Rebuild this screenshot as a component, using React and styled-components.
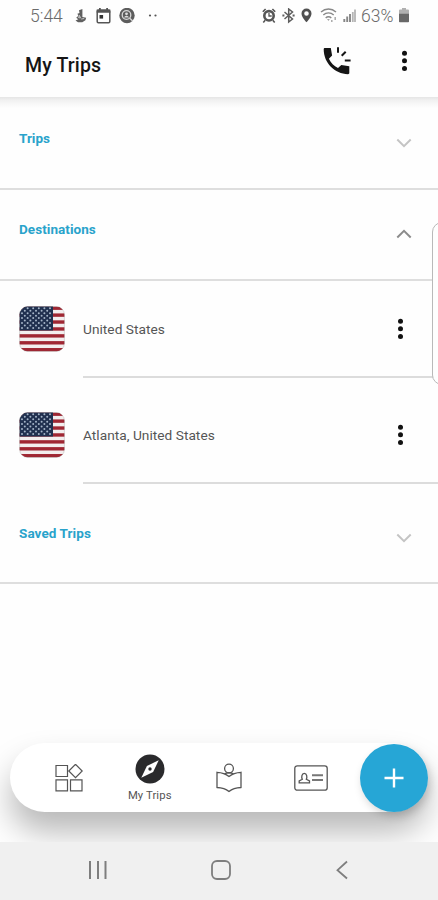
import React from "react";
import styled, { createGlobalStyle } from "styled-components";

const GlobalStyle = createGlobalStyle`
  * {
    box-sizing: border-box;
  }
  body {
    margin: 0;
    background-color: #fefefe;
    font-family: Roboto, "Liberation Sans", sans-serif;
  }
  svg {
    display: block;
    flex-shrink: 0;
  }
`;

const Screen = styled.div`
  position: relative;
  width: 438px;
  height: 900px;
  display: flex;
  flex-direction: column;
  overflow: hidden;
  background-color: #fefefe;
`;

const StatusBar = styled.div`
  height: 32px;
  padding: 0 29px 0 30px;
  display: flex;
  align-items: center;
  justify-content: space-between;
  color: #6b6b6b;
`;

const StatusGroup = styled.div`
  height: 32px;
  display: flex;
  align-items: center;
`;

const StatusText = styled.span`
  width: ${(props) => props.$width}px;
  margin-right: ${(props) => props.$gap}px;
  font-size: 17.5px;
  line-height: 32px;
  height: 32px;
  font-weight: 300;
  white-space: nowrap;
`;

const StatusIcon = styled.svg`
  width: ${(props) => props.$width}px;
  height: 16px;
  margin-right: ${(props) => props.$gap}px;
`;

const Header = styled.div`
  height: 65px;
  padding: 0 24px 0 25px;
  display: flex;
  align-items: center;
`;

const Title = styled.h1`
  flex: 1;
  margin: 0;
  padding-top: 2px;
  font-size: 19.5px;
  line-height: 24px;
  font-weight: 500;
  letter-spacing: 0.15px;
  color: #151515;
`;

const HeaderActions = styled.div`
  width: 92px;
  padding-right: 6px;
  display: flex;
  align-items: center;
  justify-content: space-between;
`;

const CallButton = styled.div`
  margin: -8px 0 0 1px;
`;

const MoreButton = styled.div`
  margin-top: -8px;
`;

const HeaderShadow = styled.div`
  height: 11px;
  background: linear-gradient(#e5e5e5, #f1f1f1 30%, #f8f8f8 65%, #fefefe);
`;

const Section = styled.div`
  height: ${(props) => props.$height}px;
  padding: ${(props) => props.$top}px 26px 0 19px;
  display: flex;
  align-items: flex-start;
  justify-content: space-between;
  border-bottom: 2px solid #dedede;
`;

const SectionTitle = styled.h2`
  margin: 0;
  font-size: 13.5px;
  line-height: 18px;
  font-weight: 700;
  letter-spacing: ${(props) => props.$spacing || 0}px;
  color: #29a3cb;
`;

const Chevron = styled.svg`
  width: 16px;
  height: 10px;
  margin-top: 9px;
  fill: none;
  stroke: ${(props) => (props.$open ? "#8b8b8b" : "#c4c4c4")};
  stroke-width: 2;
`;

const Row = styled.div`
  height: ${(props) => props.$height}px;
  padding-left: 19px;
  display: flex;
`;

const FlagBox = styled.div`
  width: 64px;
  padding-top: ${(props) => props.$top}px;
`;

const RowBody = styled.div`
  flex: 1;
  padding: ${(props) => props.$top}px 34px 0 0;
  display: flex;
  align-items: flex-start;
  justify-content: space-between;
  border-bottom: 2px solid #dcdcdc;
`;

const RowText = styled.span`
  padding-top: 2px;
  font-size: 13.7px;
  line-height: 18px;
  letter-spacing: 0.03px;
  color: #555;
`;

const EdgePanel = styled.div`
  position: absolute;
  top: 222px;
  left: 432px;
  width: 30px;
  height: 163px;
  border: 1px solid #b9b9b9;
  border-radius: 10px;
  background-color: #fefefe;
`;

const BottomArea = styled.div`
  height: 130px;
  margin-top: auto;
  padding: 31px 10px 0;
  overflow: hidden;
`;

const TabBar = styled.div`
  height: 69px;
  padding-left: 19px;
  display: flex;
  align-items: center;
  border-radius: 35px;
  background-color: #fff;
  box-shadow: 0 20px 32px rgba(0, 0, 0, 0.28);
`;

const Tab = styled.div`
  width: 80.5px;
  display: flex;
  flex-direction: column;
  align-items: center;
`;

const TabLabel = styled.span`
  margin-top: 5px;
  font-size: 11.3px;
  line-height: 13px;
  letter-spacing: 0.1px;
  color: #555;
`;

const AddButton = styled.button`
  width: 68px;
  height: 68px;
  margin-left: auto;
  padding: 0;
  display: flex;
  align-items: center;
  justify-content: center;
  border: none;
  border-radius: 50%;
  background-color: #26a6d6;
  box-shadow: 2px 4px 8px rgba(0, 0, 0, 0.17);
`;

const SystemBar = styled.div`
  height: 58px;
  padding: 0 85px 2px 88px;
  display: flex;
  align-items: center;
  justify-content: space-between;
  background-color: #f0f0f0;
`;

const MoreDots = () => (
  <svg width="7" height="22" viewBox="0 0 7 22" fill="#111">
    <circle cx="3.5" cy="3.2" r="2.5" />
    <circle cx="3.5" cy="10.8" r="2.5" />
    <circle cx="3.5" cy="18.4" r="2.5" />
  </svg>
);

const CallIcon = () => (
  <svg width="28" height="28" viewBox="0 0 28 28">
    <path
      fill="#151515"
      d="M2 1h5.8l1.3 7.6-3.2 3.2c2.2 4.4 4.8 7.3 9.1 9.2l3.3-3.1 8 1.3V26c0 .7-.5 1.2-1.3 1.2C11.7 27 .7 16 .7 2.3.7 1.5 1.2 1 2 1z"
    />
    <path
      fill="none"
      stroke="#151515"
      strokeWidth="2"
      d="M15 .2v5.6M22.7 4.7l-4 4M21.8 13.4h5.8"
    />
  </svg>
);

const Flag = () => {
  const stars = [];
  for (let r = 0; r < 9; r++) {
    for (let c = 0; c < (r % 2 ? 5 : 6); c++) {
      stars.push(
        <circle
          key={`${r}-${c}`}
          cx={3 + c * 5.6 + (r % 2 ? 2.8 : 0)}
          cy={2.3 + r * 2.45}
          r="1"
        />
      );
    }
  }
  return (
    <svg width="46" height="46" viewBox="0 0 46 46">
      <defs>
        <clipPath id="flagShape">
          <rect x="0.6" y="0.6" width="44.8" height="44.8" rx="8" />
        </clipPath>
      </defs>
      <g clipPath="url(#flagShape)">
        <rect width="46" height="46" fill="#f3eeee" />
        {[0, 1, 2, 3, 4, 5, 6].map((n) => (
          <rect key={n} y={0.5 + n * 6.92} width="46" height="3.4" fill="#a02733" />
        ))}
        <rect width="34" height="24.5" fill="#20304f" />
        <g fill="#a5b5c8">{stars}</g>
      </g>
      <rect x="0.6" y="0.6" width="44.8" height="44.8" rx="8" fill="none" stroke="#777" strokeOpacity="0.25" />
    </svg>
  );
};

const Toggle = ({ open }) => (
  <Chevron viewBox="0 0 16 10" $open={open}>
    <path d={open ? "M1.3 8.5 8 1.9l6.7 6.6" : "M1.3 1.5 8 8.1l6.7-6.6"} />
  </Chevron>
);

const SectionHeader = ({ title, height, top, spacing, open }) => (
  <Section $height={height} $top={top}>
    <SectionTitle $spacing={spacing}>{title}</SectionTitle>
    <Toggle open={open} />
  </Section>
);

const DestinationRow = ({ name, height, top }) => (
  <Row $height={height}>
    <FlagBox $top={top}>
      <Flag />
    </FlagBox>
    <RowBody $top={top + 12}>
      <RowText>{name}</RowText>
      <MoreDots />
    </RowBody>
  </Row>
);

const Status = () => (
  <StatusBar>
    <StatusGroup>
      <StatusText $width={34} $gap={11}>
        5:44
      </StatusText>
      <StatusIcon $width={12} $gap={9} viewBox="0 0 12 16" fill="#606060">
        <path d="M4 2.2 7.4 1v8l3.8.8-.8 2.4-3.1 2H3L.5 12.6l2.8-1.3L1.2 9.7l2.2-2-1-2L4.5 5z" />
        <path d="m4.5 7.5-1 2 2 .5zM6.2 11l3-.5" stroke="#ddd" strokeWidth=".8" fill="none" />
      </StatusIcon>
      <StatusIcon $width={15} $gap={8} viewBox="0 0 15 16">
        <rect x="1.2" y="2.2" width="12.6" height="12.6" rx="1.2" fill="none" stroke="#555" strokeWidth="1.5" />
        <path d="M.7 1.5h13.6v3.3H.7zM3 0h1.8v2H3zM10.2 0H12v2h-1.8z" fill="#555" />
        <rect x="3.5" y="7" width="3.6" height="3.6" fill="#333" />
      </StatusIcon>
      <StatusIcon $width={16} $gap={13} viewBox="0 0 16 16">
        <circle cx="8" cy="7.5" r="7.7" fill="#5d5d5d" />
        <circle cx="7.5" cy="7" r="4.3" fill="none" stroke="#d7d7d7" strokeWidth="1.3" />
        <path d="m10.7 10.2 3 2.8" stroke="#d7d7d7" strokeWidth="1.4" />
        <circle cx="7.5" cy="5.8" r="1.4" fill="#ddd" />
        <path d="M5 9.5a2.7 2.7 0 0 1 5 0z" fill="#ddd" />
      </StatusIcon>
      <StatusIcon $width={10} $gap={0} viewBox="0 0 10 16" fill="#555">
        <circle cx="2" cy="7.5" r="1.1" />
        <circle cx="7.5" cy="7.5" r="1.1" />
      </StatusIcon>
    </StatusGroup>
    <StatusGroup>
      <StatusIcon $width={14} $gap={6} viewBox="0 0 14 16" fill="none" stroke="#555">
        <circle cx="7" cy="7.8" r="4.7" strokeWidth="2.6" />
        <path d="M.8 3.8 3.6 1M13.2 3.8 10.4 1M3.2 12.2 1.3 14.4M10.8 12.2l1.9 2.2" strokeWidth="1.6" />
        <path d="M7 5v3h2.7" strokeWidth="1.3" />
      </StatusIcon>
      <StatusIcon $width={13} $gap={6} viewBox="0 0 13 16" fill="none" stroke="#5d5d5d">
        <path d="m2.5 4 8 7L6.7 14V1l3.8 3-8 7" strokeWidth="1.5" />
        <path d="M.4 7.5h2M10.6 7.5h2" strokeWidth="1.9" />
      </StatusIcon>
      <StatusIcon $width={11} $gap={8} viewBox="0 0 11 16" fill="#505050">
        <path
          fillRule="evenodd"
          d="M5.5.5a5 5 0 0 0-5 5c0 3.7 5 8.8 5 8.8s5-5.1 5-8.8a5 5 0 0 0-5-5zm0 2.7a2.3 2.3 0 1 1 0 4.6 2.3 2.3 0 0 1 0-4.6z"
        />
      </StatusIcon>
      <StatusIcon $width={18} $gap={5} viewBox="0 0 18 16" fill="none" stroke="#888">
        <path d="M1 4c4.5-4 10.5-4 15 0M3.3 7c3-2.8 7.4-2.8 10.4 0M5.7 10c1.6-1.6 4-1.6 5.6 0" strokeWidth="1.4" />
        <path d="m7 11.2 1.5 1.6 1.3-1.6z" fill="#888" stroke="none" />
        <path d="M11.8 12v2M15.2 9v3" strokeWidth="1.5" stroke="#aaa" />
      </StatusIcon>
      <StatusIcon $width={13} $gap={5} viewBox="0 0 13 16">
        <path d="M1.3 14v-3M4.2 14V8.6M7 14V6" stroke="#868686" strokeWidth="1.9" />
        <path d="M9.8 14V4M12 14V1.5" stroke="#b5b5b5" strokeWidth="1.8" />
      </StatusIcon>
      <StatusText $width={34} $gap={4}>
        63%
      </StatusText>
      <StatusIcon $width={10} $gap={0} viewBox="0 0 10 16">
        <path d="M3 0h4v1.6h2A1 1 0 0 1 10 2.6V7H0V2.6a1 1 0 0 1 1-1h2z" fill="#b0b0b0" />
        <path d="M0 5.7h10v7.7a.8.8 0 0 1-.8.8H.8a.8.8 0 0 1-.8-.8z" fill="#686868" />
      </StatusIcon>
    </StatusGroup>
  </StatusBar>
);

const App = () => {
  return (
    <>
      <GlobalStyle />
      <Screen>
        <Status />
        <Header>
          <Title>My Trips</Title>
          <HeaderActions>
            <CallButton>
              <CallIcon />
            </CallButton>
            <MoreButton>
              <MoreDots />
            </MoreButton>
          </HeaderActions>
        </Header>
        <HeaderShadow />
        <SectionHeader title="Trips" height={82} top={21} />
        <SectionHeader title="Destinations" height={91} top={30} spacing={0.05} open />
        <DestinationRow name="United States" height={97} top={25} />
        <DestinationRow name="Atlanta, United States" height={106} top={34} />
        <SectionHeader title="Saved Trips" height={100} top={40} spacing={0.08} />
        <EdgePanel />
        <BottomArea>
          <TabBar>
            <Tab>
              <svg width="28" height="28" viewBox="0 0 28 28" fill="none" stroke="#555" strokeWidth="1.2">
                <path d="M1 1.5h11.5v11H1zM1 15.8h11.5v11H1zM15.5 15.8H27v11H15.5zM20.5.3l6.7 6.7-6.7 6.7L13.8 7z" />
              </svg>
            </Tab>
            <Tab>
              <svg width="30" height="30" viewBox="0 0 30 30">
                <circle cx="15" cy="15" r="14.5" fill="#2a2a2c" />
                <path d="m23.7 6.3-5.6 11.8-11.8 5.6 5.6-11.8z" fill="#fff" />
                <circle cx="15" cy="15" r="1.7" fill="#2a2a2c" />
              </svg>
              <TabLabel>My Trips</TabLabel>
            </Tab>
            <Tab>
              <svg width="30" height="30" viewBox="0 0 30 30" fill="none" stroke="#555" strokeWidth="1.3">
                <circle cx="14" cy="5.5" r="4.4" />
                <path d="M14 13.5c-3-2.5-7.5-4-12-4.2v15.2c4.7.2 9 1.5 12 4 3-2.5 7.3-3.8 12-4V9.3c-4.5.2-9 1.7-12 4.2zM9.8 11c1.5-1.7 6.9-1.7 8.4 0" />
              </svg>
            </Tab>
            <Tab>
              <svg width="34" height="26" viewBox="0 0 34 26" fill="none" stroke="#555" strokeWidth="1.3">
                <rect x=".8" y=".8" width="32.4" height="24.4" rx="2.5" />
                <path d="M8.3 14.3c-1-2-.7-6 2-6s3 4 2 6l3.2 1.6v1.9H5.2v-1.9z" />
                <path d="M18 10.2h11M18 15h11" strokeWidth="2" stroke="#777" />
              </svg>
            </Tab>
            <AddButton>
              <svg width="20" height="20" viewBox="0 0 20 20" stroke="#fff" strokeWidth="2.4">
                <path d="M10 .5v19M.5 10h19" />
              </svg>
            </AddButton>
          </TabBar>
        </BottomArea>
        <SystemBar>
          <svg width="20" height="20" viewBox="0 0 20 20" stroke="#7e7e7e" strokeWidth="2">
            <path d="M2 1v18M10 1v18M17.5 1v18" />
          </svg>
          <svg width="20" height="20" viewBox="0 0 20 20" fill="none" stroke="#7e7e7e" strokeWidth="1.8">
            <rect x="1" y="1" width="18" height="18" rx="5" />
          </svg>
          <svg width="20" height="20" viewBox="0 0 20 20" fill="none" stroke="#7e7e7e" strokeWidth="1.8">
            <path d="m14 1.5-9.5 8.7 9.5 8.3" />
          </svg>
        </SystemBar>
      </Screen>
    </>
  );
};

export default App;
